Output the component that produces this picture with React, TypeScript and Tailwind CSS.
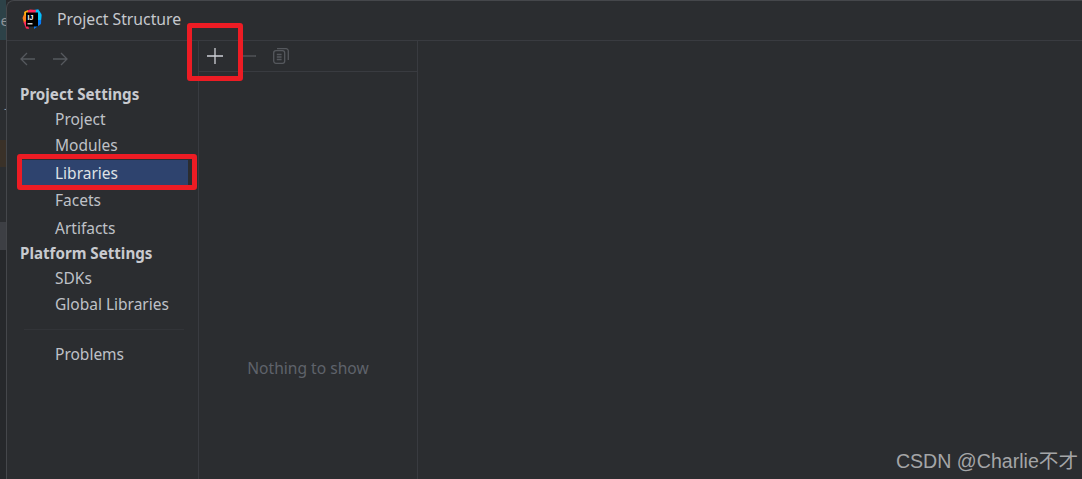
const ui = { fontFamily: '"Noto Sans", "Open Sans", sans-serif' };

function Item({ label, h }: { label: string; h: string }) {
  return <div className={`${h} pl-[48px] pb-[2px] flex items-center text-[15.5px] text-[#bfc1c7]`}>{label}</div>;
}

function Logo() {
  return (
    <svg width="20" height="21" viewBox="0 0 20 21">
      <path d="M12 1 L16 0.5 L19.5 5 L19 15 L12 20 Z" fill="#087cfa" />
      <path d="M12 1 L16.5 0.5 L19.5 6 L19 11 L14 11 Z" fill="#07c3f2" />
      <path d="M3 2.5 L8 0.5 L14 1 L13 6 L4 8 Z" fill="#fe2857" />
      <path d="M0.5 9 L3 3 L5 8 L5 15 L2 14 Z" fill="#fc801d" />
      <path d="M2 3 L6 1 L5 6 L3 7 Z" fill="#fdb60d" />
      <path d="M1.5 13 L5 12 L7 20 L4 19.5 Z" fill="#fe2857" />
      <rect x="4" y="3.5" width="12" height="14" fill="#000" />
      <text x="5.5" y="10.5" fontSize="7" fontWeight="700" fill="#fff" fontFamily="Liberation Sans, sans-serif">IJ</text>
      <rect x="5.5" y="14.2" width="5" height="1.2" fill="#fff" />
    </svg>
  );
}

function Copy() {
  return (
    <svg width="16" height="16" viewBox="0 0 16 16" fill="none" stroke="#55585d" strokeWidth="1.3">
      <rect x="0.7" y="2.7" width="11" height="12.6" rx="2.2" />
      <path d="M4 0.7 H13 A2.2 2.2 0 0 1 15.3 3 V12" />
      <path d="M3.8 6.5 H8.6 M3.8 9 H8.6 M3.8 11.5 H8.6" />
    </svg>
  );
}

function Arrow({ flip }: { flip?: boolean }) {
  return (
    <svg width="15" height="14" viewBox="0 0 15 14" fill="none" stroke="#56595e" strokeWidth="1.3" className={flip ? "-scale-x-100" : ""}>
      <path d="M15 7 H1 M7 1 L1 7 L7 13" />
    </svg>
  );
}

export default function App() {
  return (
    <div className="w-[1082px] h-[479px] overflow-hidden flex bg-[#26282b] relative" style={ui}>
      <div className="w-[6px] shrink-0 flex flex-col overflow-hidden text-[15px] text-[#8e9196] leading-none">
        <div className="h-[40px] bg-[#2d4248] flex items-center justify-end">
          <span className="-mr-[3px]">e</span>
        </div>
        <div className="h-[100px] bg-[#2b2d30] flex items-center justify-end pt-[20px]">
          <span className="-mr-[3px]">j</span>
        </div>
        <div className="h-[27px] bg-[#3a3128]" />
        <div className="h-[55px] bg-[#2b2d30]" />
        <div className="h-[28px] bg-[#3d3f44]" />
        <div className="flex-1" />
      </div>
      <div className="flex-1 min-w-0 flex flex-col rounded-tl-[8px] bg-[#2b2d30] border-l border-t border-[#45474b]">
        <div className="h-[40px] shrink-0 flex items-center pl-[15px] pb-[2px] border-b border-[#393b40]">
          <Logo />
          <span className="ml-[15px] text-[15.75px] text-[#c6c8cd]">Project Structure</span>
        </div>
        <div className="flex-1 flex min-h-0">
          <div className="w-[192px] shrink-0 border-r border-[#393b40]">
            <div className="h-[38px] pl-[13px] pb-[2px] flex items-center gap-[18px]">
              <Arrow />
              <Arrow flip />
            </div>
            <div className="h-[31px] pl-[13px] flex items-center text-[15.15px] font-bold text-[#c8cacf]">Project Settings</div>
            <div className="h-[24px] pl-[48px] pb-[4px] flex items-center text-[15.5px] text-[#bfc1c7]">Project</div>
            <Item label="Modules" h="h-[26px]" />
            <div className="h-[29px] ml-[13px] w-[168px] bg-[#2e436e] flex items-center pl-[35px] pb-[2px] text-[15.5px] text-[#dfe1e5]">Libraries</div>
            <Item label="Facets" h="h-[26px]" />
            <Item label="Artifacts" h="h-[29px]" />
            <div className="h-[22px] pl-[13px] pb-[4px] flex items-center text-[15.15px] font-bold text-[#c8cacf]">Platform Settings</div>
            <Item label="SDKs" h="h-[27px]" />
            <Item label="Global Libraries" h="h-[25px]" />
            <div className="h-[1px] ml-[17px] mr-[14px] mt-[11px] bg-[#323438]" />
            <div className="h-[24px] mt-[14px] pl-[48px] pb-[2px] flex items-center text-[15.5px] text-[#bfc1c7]">Problems</div>
          </div>
          <div className="w-[219px] shrink-0 border-r border-[#393b40] flex flex-col">
            <div className="h-[31px] shrink-0 border-b border-[#393b40] flex items-center">
              <svg width="16" height="16" viewBox="0 0 16 16" className="ml-[8px]" stroke="#ced0d6" strokeWidth="1.3">
                <path d="M8 0 V16 M0 8 H16" />
              </svg>
              <svg width="14" height="2" viewBox="0 0 14 2" className="ml-[19px]" stroke="#55585c" strokeWidth="1.3">
                <path d="M0 1 H14" />
              </svg>
              <span className="ml-[17px] flex"><Copy /></span>
            </div>
            <div className="flex-1 flex justify-center pt-[285px] text-[15.6px] text-[#5f636b]">Nothing to show</div>
          </div>
          <div className="flex-1" />
        </div>
      </div>
      <div className="absolute left-[187px] top-[23px] w-[56px] h-[58px] border-[5px] border-[#ed1c24] rounded-[3px]" />
      <div className="absolute left-[17px] top-[154px] w-[180px] h-[36px] border-[5px] border-[#ed1c24] rounded-[3px]" />
      <div className="absolute right-[4px] top-[447px] text-[19.6px] leading-[28px] text-[#a4a5a7] whitespace-nowrap" style={{ fontFamily: '"Liberation Sans", "Noto Sans CJK SC", sans-serif' }}>CSDN @Charlie不才</div>
    </div>
  );
}
